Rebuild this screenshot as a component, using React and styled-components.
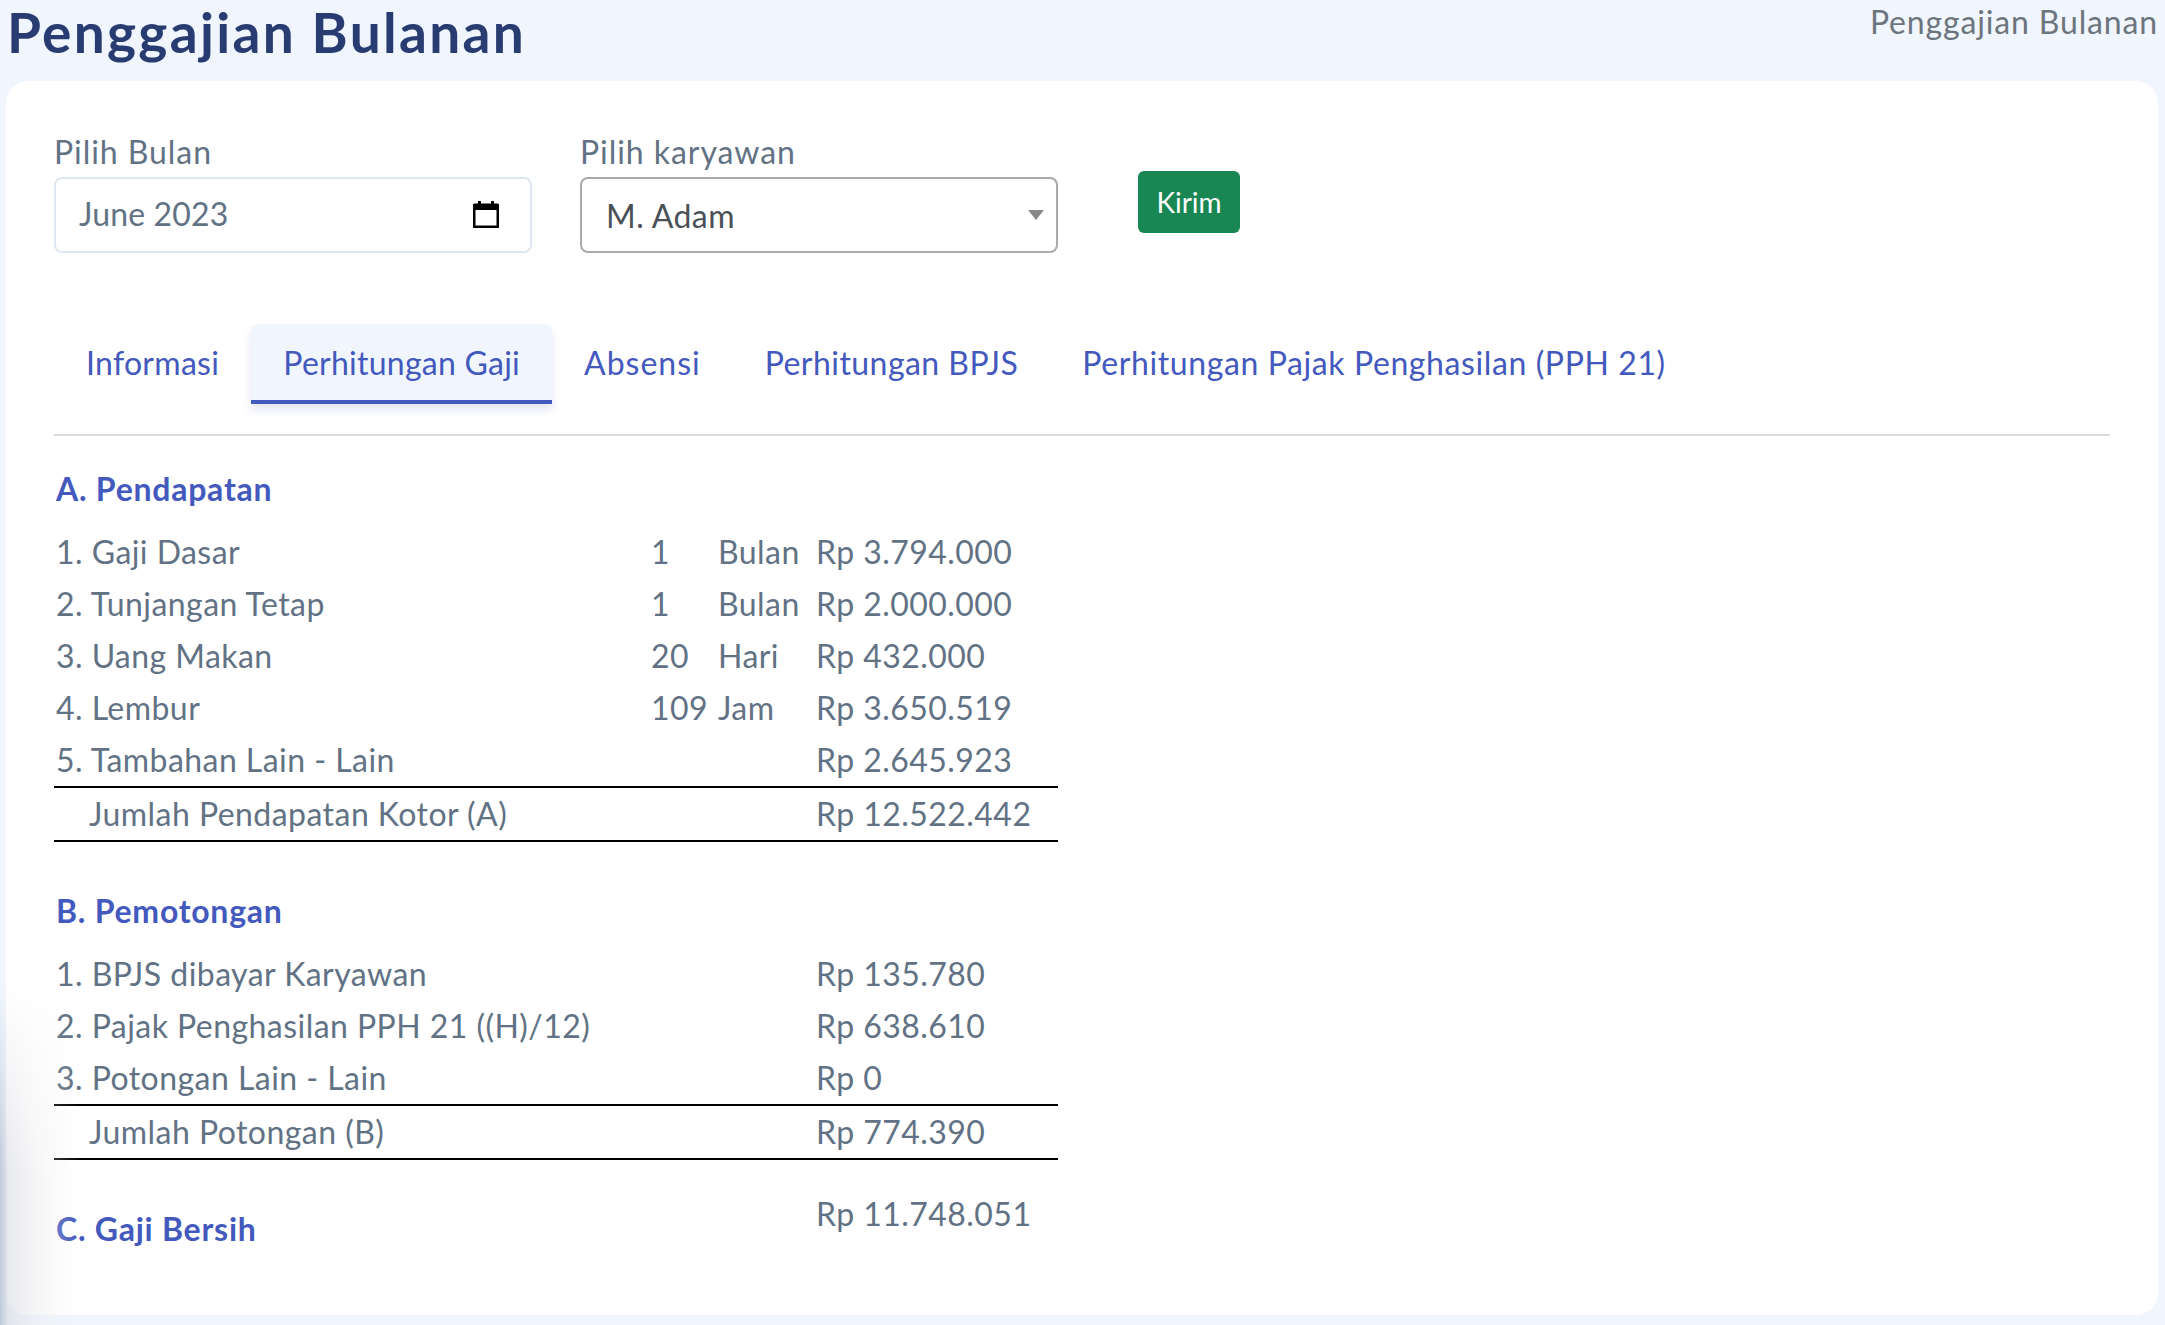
import React from 'react';
import styled, { createGlobalStyle } from 'styled-components';

const GlobalStyle = createGlobalStyle`
    html, body {
        margin: 0;
        height: 100%;
        overflow: hidden;
        background-color: #f1f6fe;
        font-family: Lato, "Noto Sans", sans-serif;
        letter-spacing: 0.45px;
    }
`

const Page = styled.div`
    position: relative;
    width: 2165px;
    height: 1325px;
    padding: 0 7px 0 6px;
    box-sizing: border-box;
    overflow: hidden;
`

const Header = styled.div`
    height: 81px;
    display: flex;
    justify-content: space-between;
    align-items: flex-start;
`

const Title = styled.h1`
    margin: 0 0 0 1px;
    font-size: 55px;
    line-height: 64px;
    font-weight: 700;
    letter-spacing: 2.3px;
    color: #293c72;
`

const Crumb = styled.div`
    margin-top: 3px;
    font-size: 32px;
    line-height: 38px;
    letter-spacing: 0.85px;
    color: #6c757d;
`

const Card = styled.div`
    height: 1234px;
    box-sizing: border-box;
    padding: 52px 48px 0;
    background-color: #fff;
    border-radius: 22px;
`

const FormRow = styled.div`
    display: flex;
    align-items: flex-start;
`

const Field = styled.div`
    width: 478px;
    margin-right: 48px;
`

const Label = styled.div`
    font-size: 32px;
    line-height: 38px;
    color: #627285;
    margin-bottom: 6px;
    letter-spacing: 0.95px;
`

const Control = styled.div`
    height: 76px;
    box-sizing: border-box;
    display: flex;
    align-items: center;
    justify-content: space-between;
    border-radius: 8px;
    border: 2px solid ${props => (props.select ? '#aaa' : '#dee7f2')};
    padding: ${props => (props.select ? '0 12px 0 24px' : '0 31px 0 23px')};
    font-size: 32px;
    color: ${props => (props.select ? '#495057' : '#627285')};
`

const DateText = styled.span`
    margin-top: -3px;
    letter-spacing: 0.15px;
`

const CalendarBox = styled.span`
    display: flex;
    margin-top: -2px;
`

const Arrow = styled.span`
    width: 0;
    height: 0;
    border-left: 8px solid transparent;
    border-right: 8px solid transparent;
    border-top: 10px solid #888;
`

const Button = styled.button`
    margin: 38px 0 0 32px;
    width: 102px;
    height: 62px;
    padding: 0;
    border: none;
    border-radius: 6px;
    background-color: #198754;
    color: #fff;
    font-family: inherit;
    font-size: 28px;
`

const Tabs = styled.div`
    margin-top: 71px;
    height: 110px;
    display: flex;
    align-items: flex-start;
    border-bottom: 2px solid #d9dcdf;
`

const Tab = styled.div`
    height: 80px;
    box-sizing: border-box;
    padding: 20px 32px 0;
    font-size: 32px;
    line-height: 38px;
    letter-spacing: ${props => props.spacing}px;
    color: #4359bd;
    border-radius: 8px 8px 0 0;

    ${props => (props.active
        ? ` background-color: #f1f6fe;
            border-bottom: 4px solid #4359bd;
            box-shadow: 0 6px 10px rgba(67, 89, 189, 0.15);`
        : null)}
`

const Section = styled.div`
    margin: ${props => props.top}px 0 0 2px;
    font-size: 32px;
    line-height: 38px;
    font-weight: 700;
    letter-spacing: 0.75px;
    color: #4359bd;
`

const Table = styled.div`
    width: 1004px;
    margin-top: 18px;
`

const Row = styled.div`
    display: grid;
    grid-template-columns: 595px 67px 98px 1fr;
    height: ${props => (props.total ? 56 : 52)}px;
    box-sizing: border-box;
    align-items: center;
    padding: 0 0 2px 2px;
    font-size: 32px;
    color: #627285;

    ${props => (props.total
        ? ` border-top: 2px solid #000;
            border-bottom: 2px solid #000;`
        : null)}
`

const RowLabel = styled.span`
    padding-left: ${props => (props.total ? 33 : 0)}px;
`

const Net = styled.div`
    display: grid;
    grid-template-columns: 762px 1fr;
    width: 1004px;
    margin-top: 35px;
    align-items: start;
    font-size: 32px;
    line-height: 38px;
    color: #627285;
`

const NetLabel = styled(Section)`
    margin: 15px 0 0 2px;
`

const EdgeShade = styled.div`
    position: absolute;
    left: 0;
    bottom: 0;
    width: 80px;
    height: 340px;
    background: linear-gradient(to right, rgba(150, 165, 190, 0.55), rgba(205, 208, 216, 0.45) 10%, rgba(232, 232, 236, 0.4) 45%, rgba(255, 255, 255, 0));
    mask-image: linear-gradient(to bottom, transparent, #000 55%);
    pointer-events: none;
`

const CalendarIcon = () => (
    <svg width="26" height="28" viewBox="0 0 26 28">
        <path d="M2 5h22a1 1 0 0 1 1 1v20a1 1 0 0 1-1 1H2a1 1 0 0 1-1-1V6a1 1 0 0 1 1-1z" fill="none" stroke="#000" strokeWidth="3" />
        <path d="M1 4h24v6H1zM5 1h3v4H5zM18 1h3v4h-3z" fill="#000" />
    </svg>
)

const income = [
    ['1. Gaji Dasar', '1', 'Bulan', 'Rp 3.794.000'],
    ['2. Tunjangan Tetap', '1', 'Bulan', 'Rp 2.000.000'],
    ['3. Uang Makan', '20', 'Hari', 'Rp 432.000'],
    ['4. Lembur', '109', 'Jam', 'Rp 3.650.519'],
    ['5. Tambahan Lain - Lain', '', '', 'Rp 2.645.923'],
]

const deductions = [
    ['1. BPJS dibayar Karyawan', '', '', 'Rp 135.780'],
    ['2. Pajak Penghasilan PPH 21 ((H)/12)', '', '', 'Rp 638.610'],
    ['3. Potongan Lain - Lain', '', '', 'Rp 0'],
]

const tabs = [
    { label: 'Informasi', spacing: 0.3 },
    { label: 'Perhitungan Gaji', spacing: 0.25, active: true },
    { label: 'Absensi', spacing: 1 },
    { label: 'Perhitungan BPJS', spacing: 0.45 },
    { label: 'Perhitungan Pajak Penghasilan (PPH 21)', spacing: 0.6 },
]

const Rows = ({ items, total, value }) => (
    <Table>
        {items.map(item => (
            <Row key={item[0]}>
                <RowLabel>{item[0]}</RowLabel>
                <span>{item[1]}</span>
                <span>{item[2]}</span>
                <span>{item[3]}</span>
            </Row>
        ))}
        <Row total>
            <RowLabel total>{total}</RowLabel>
            <span></span>
            <span></span>
            <span>{value}</span>
        </Row>
    </Table>
)

const App = () => {
    return (
        <Page>
            <GlobalStyle />
            <Header>
                <Title>Penggajian Bulanan</Title>
                <Crumb>Penggajian Bulanan</Crumb>
            </Header>
            <Card>
                <FormRow>
                    <Field>
                        <Label>Pilih Bulan</Label>
                        <Control>
                            <DateText>June 2023</DateText>
                            <CalendarBox><CalendarIcon /></CalendarBox>
                        </Control>
                    </Field>
                    <Field>
                        <Label>Pilih karyawan</Label>
                        <Control select>M. Adam<Arrow /></Control>
                    </Field>
                    <Button>Kirim</Button>
                </FormRow>
                <Tabs>
                    {tabs.map(tab => (
                        <Tab key={tab.label} active={tab.active} spacing={tab.spacing}>{tab.label}</Tab>
                    ))}
                </Tabs>
                <Section top={34}>A. Pendapatan</Section>
                <Rows items={income} total="Jumlah Pendapatan Kotor (A)" value="Rp 12.522.442" />
                <Section top={50}>B. Pemotongan</Section>
                <Rows items={deductions} total="Jumlah Potongan (B)" value="Rp 774.390" />
                <Net>
                    <NetLabel as="div">C. Gaji Bersih</NetLabel>
                    <span>Rp 11.748.051</span>
                </Net>
            </Card>
            <EdgeShade />
        </Page>
    )
}

export default App;
